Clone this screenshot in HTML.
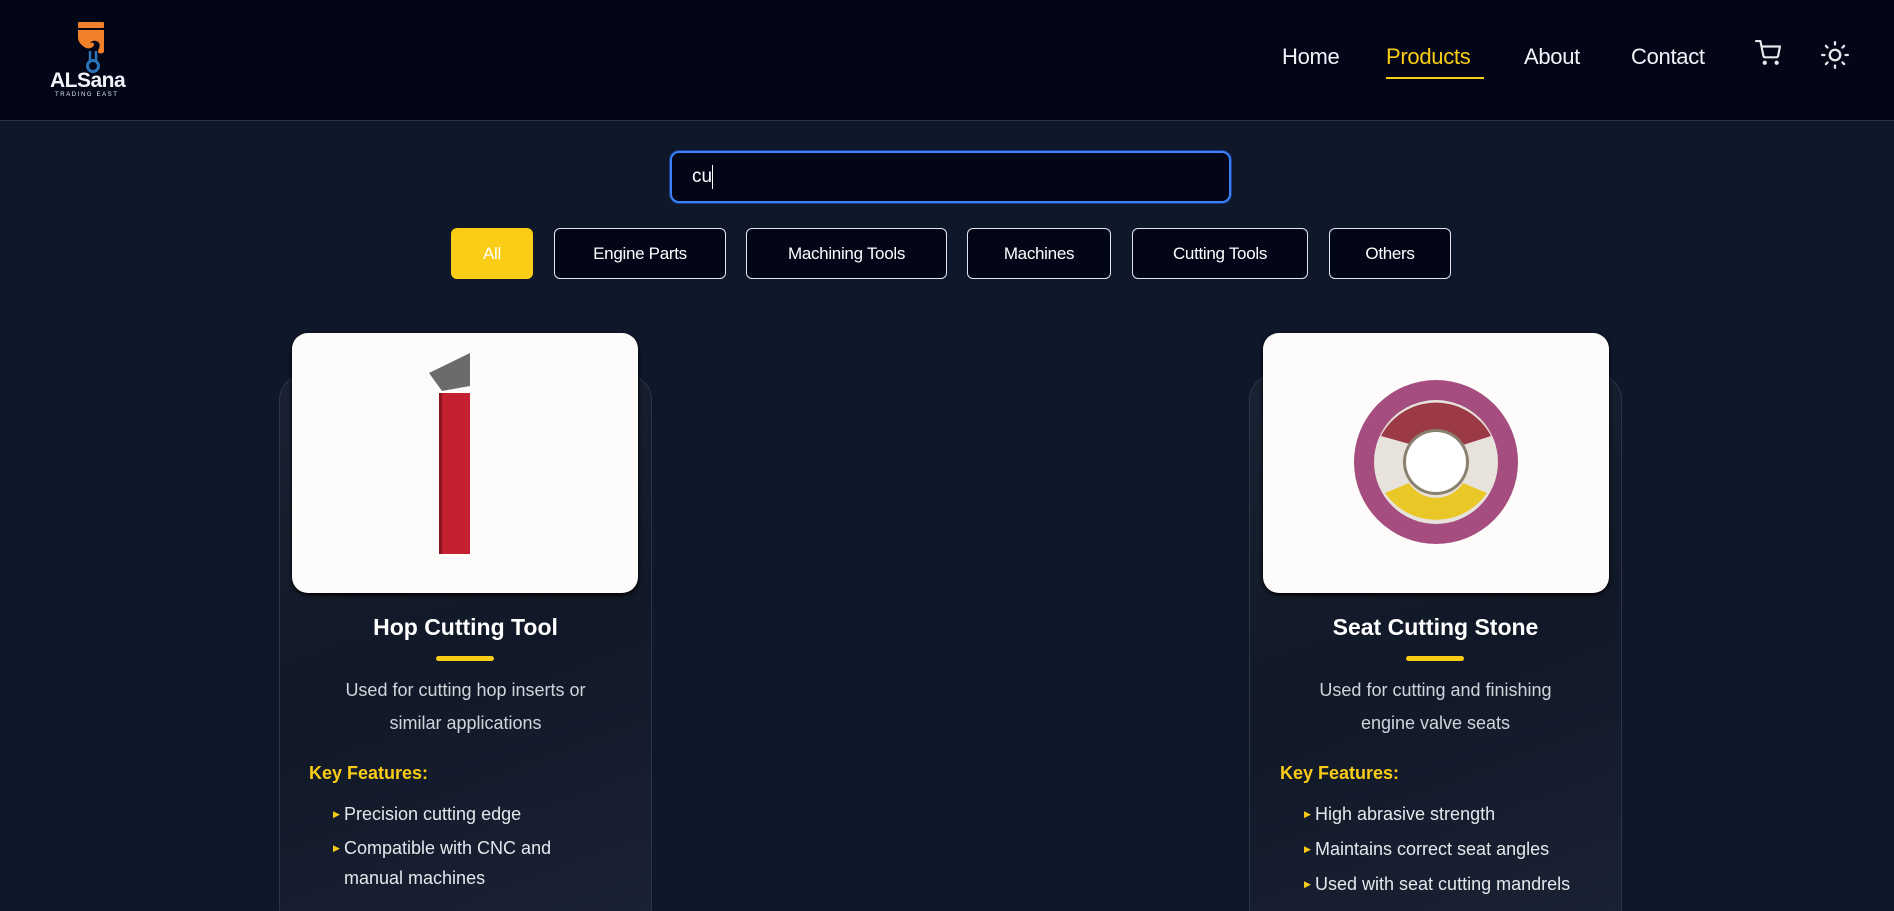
<!DOCTYPE html>
<html><head><meta charset="utf-8">
<style>
*{margin:0;padding:0;box-sizing:border-box}
html,body{width:1894px;height:911px;overflow:hidden}
body{background:#0f172a;font-family:"Liberation Sans",sans-serif;position:relative;color:#fff}
.hdr{position:absolute;left:0;top:0;width:1894px;height:121px;background:#020617;border-bottom:1px solid #2a3344}
.nav{position:absolute;top:44px;font-size:22px;color:#f1f5f9;letter-spacing:-0.3px}
.abs{position:absolute}
.search{position:absolute;left:670px;top:151px;width:561px;height:52px;background:#020617;border:2px solid #3b82f6;border-radius:9px;box-shadow:0 0 0 1px #1e3a8a}
.btn{position:absolute;top:228px;height:51px;border:1px solid #e2e8f0;border-radius:6px;background:#020617;color:#fff;font-size:17px;display:flex;align-items:center;justify-content:center;letter-spacing:-0.3px}
.card{position:absolute;top:374px;width:373px;height:560px;border:1px solid #2a3447;border-radius:26px;background:linear-gradient(160deg,#1a2233,#111827 50%,#1a2235)}
.img{position:absolute;top:333px;width:346px;height:260px;background:#fdfcfa;border-radius:16px;box-shadow:0 2px 4px #000;overflow:hidden}
.title{position:absolute;width:373px;text-align:center;font-size:23px;font-weight:bold;top:614px}
.ul{position:absolute;top:656px;width:58px;height:5px;background:#facc15;border-radius:3px}
.desc{position:absolute;width:373px;text-align:center;font-size:18px;line-height:33px;color:#d1d5db;top:674px}
.kf{position:absolute;top:763px;font-size:18px;font-weight:bold;color:#facc15}
.li{position:absolute;font-size:18px;color:#e5e7eb;line-height:30px}
.li b{position:absolute;left:-11px;top:0;color:#facc15;font-size:9px;font-weight:normal}
</style></head><body>
<div class="hdr">
 <svg class="abs" style="left:76px;top:20px" width="32" height="54" viewBox="0 0 32 54">
  <rect x="2" y="2" width="26" height="6" rx="1" fill="#f0812a"/>
  <path d="M2 10h26v22c-2 2-5 2-6 0 0-3 3-6 1-9-2-3-7-3-9 0 2-1 5 0 4 2-1 3-5 4-8 3-4-2-8-6-8-10z" fill="#f0812a"/>
  <path d="M14 31v11 M20 31v11" stroke="#2b74b8" stroke-width="2.5"/>
  <circle cx="17" cy="46" r="5.5" fill="none" stroke="#2b74b8" stroke-width="3"/>
 </svg>
 <div class="abs" style="left:50px;top:69px;font-size:21px;font-weight:bold;color:#f1f5f9;letter-spacing:-0.5px">ALSana</div>
 <div class="abs" style="left:55px;top:92px;font-size:6px;color:#e2e8f0;letter-spacing:1.6px">TRADING EAST</div>
 <div class="nav" style="left:1282px">Home</div>
 <div class="nav" style="left:1386px;color:#facc15">Products</div>
 <div class="abs" style="left:1386px;top:77px;width:98px;height:2px;background:#facc15"></div>
 <div class="nav" style="left:1524px">About</div>
 <div class="nav" style="left:1631px">Contact</div>
 <svg class="abs" style="left:1755px;top:40px" width="26" height="26" viewBox="0 0 24 24" fill="none" stroke="#e5e7eb" stroke-width="2" stroke-linecap="round" stroke-linejoin="round"><path d="M1 1h4l2.7 13.4a2 2 0 0 0 2 1.6h9.7a2 2 0 0 0 2-1.6L23 6H6"/><circle cx="9" cy="21" r="1"/><circle cx="20" cy="21" r="1"/></svg>
 <svg class="abs" style="left:1821px;top:41px" width="28" height="28" viewBox="0 0 24 24" fill="none" stroke="#e5e7eb" stroke-width="2" stroke-linecap="round"><circle cx="12" cy="12" r="4.5"/><path d="M12 1v2M12 21v2M4.2 4.2l1.4 1.4M18.4 18.4l1.4 1.4M1 12h2M21 12h2M4.2 19.8l1.4-1.4M18.4 5.6l1.4-1.4"/></svg>
</div>

<div class="search"><span class="abs" style="left:20px;top:13px;font-size:19px;color:#fff">cu</span><span class="abs" style="left:40px;top:12px;width:1px;height:24px;background:#fff"></span></div>

<div class="btn" style="left:451px;width:82px;background:#facc15;border-color:#facc15">All</div>
<div class="btn" style="left:554px;width:172px">Engine Parts</div>
<div class="btn" style="left:746px;width:201px">Machining Tools</div>
<div class="btn" style="left:967px;width:144px">Machines</div>
<div class="btn" style="left:1132px;width:176px">Cutting Tools</div>
<div class="btn" style="left:1329px;width:122px">Others</div>

<div class="card" style="left:279px"></div>
<div class="card" style="left:1249px"></div>

<div class="img" style="left:292px">
 <svg width="346" height="260">
  <rect x="147" y="60" width="31" height="161" fill="#c4202f"/>
  <rect x="147" y="60" width="3" height="161" fill="#8a1420"/>
  <polygon points="137,40 178,20 178,53 150,58" fill="#6b6b6b"/>
 </svg>
</div>
<div class="img" style="left:1263px">
 <svg width="346" height="260">
  <circle cx="173" cy="129" r="82" fill="#a44d7e"/>
  <circle cx="173" cy="129" r="62" fill="#e8e2dc"/>
  <path d="M118 103 A62 62 0 0 1 228 103 L200 112 A32 32 0 0 0 150 112 Z" fill="#9b3a45"/>
  <path d="M122 160 A62 62 0 0 0 224 160 L200 150 A32 32 0 0 1 146 150 Z" fill="#e8c726"/>
  <circle cx="173" cy="129" r="33" fill="#8a8070"/>
  <circle cx="173" cy="129" r="30" fill="#fff"/>
 </svg>
</div>

<div class="title" style="left:279px">Hop Cutting Tool</div>
<div class="ul" style="left:436px"></div>
<div class="desc" style="left:279px">Used for cutting hop inserts or<br>similar applications</div>
<div class="kf" style="left:309px">Key Features:</div>
<div class="li" style="left:344px;top:799px"><b>▶</b>Precision cutting edge</div>
<div class="li" style="left:344px;top:833px;width:250px"><b>▶</b>Compatible with CNC and manual machines</div>
<div class="li" style="left:344px;top:904px"><b>▶</b>Provides clean and accurate</div>

<div class="title" style="left:1249px">Seat Cutting Stone</div>
<div class="ul" style="left:1406px"></div>
<div class="desc" style="left:1249px">Used for cutting and finishing<br>engine valve seats</div>
<div class="kf" style="left:1280px">Key Features:</div>
<div class="li" style="left:1315px;top:799px"><b>▶</b>High abrasive strength</div>
<div class="li" style="left:1315px;top:834px"><b>▶</b>Maintains correct seat angles</div>
<div class="li" style="left:1315px;top:869px"><b>▶</b>Used with seat cutting mandrels</div>
</body></html>
